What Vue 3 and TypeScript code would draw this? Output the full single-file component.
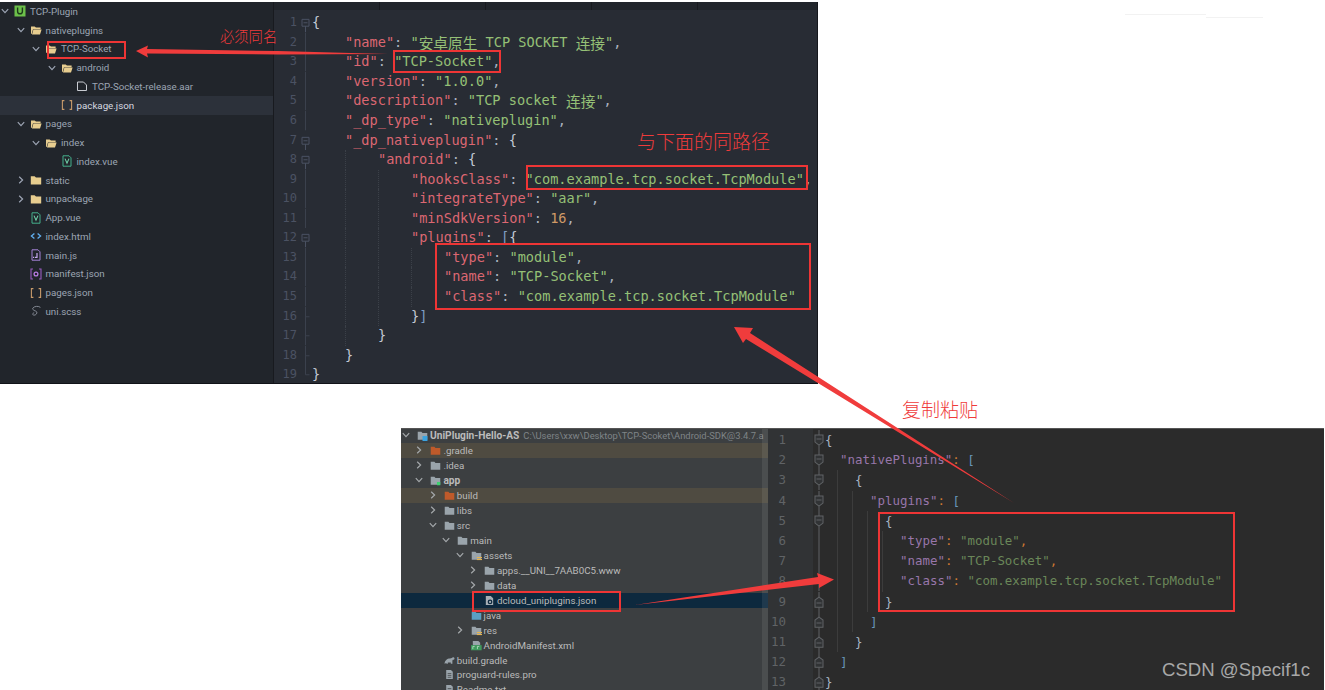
<script setup lang="ts">
interface Token { cls: string; text: string }
interface TreeRow { d: number; label: string; icon: string; chev?: 'd' | 'r'; cls?: string }
interface CodeLine { n: number; indent: number; fold: string; tokens: Token[] }

function tokenize(src: string): Token[] {
  const out: Token[] = []
  const re = /"[^"]*"|\d+|[\[\]{}:,]|\s+/g
  let m: RegExpExecArray | null
  while ((m = re.exec(src))) {
    const t = m[0]
    if (t[0] === '"') {
      const isKey = src.slice(re.lastIndex).startsWith(':')
      const base = isKey ? 'k' : 's'
      t.split(/([\u4e00-\u9fff]+)/).forEach((p, i) => {
        if (p) out.push({ cls: i % 2 ? base + ' cjk' : base, text: p })
      })
    } else if (/^\d/.test(t)) out.push({ cls: 'val', text: t })
    else if (t === ':' || t === ',') out.push({ cls: 'c', text: t })
    else if (t === '[' || t === ']') out.push({ cls: 'b', text: t })
    else out.push({ cls: 'p', text: t })
  }
  return out
}

function build(src: [number, string, string][]): CodeLine[] {
  return src.map(([indent, fold, text], i) => ({ n: i + 1, indent, fold, tokens: tokenize(text) }))
}

const topLines = build([
  [0, 'f-box', '{'],
  [1, 'f-line', '"name": "安卓原生 TCP SOCKET 连接",'],
  [1, 'f-line', '"id": "TCP-Socket",'],
  [1, 'f-line', '"version": "1.0.0",'],
  [1, 'f-line', '"description": "TCP socket 连接",'],
  [1, 'f-line', '"_dp_type": "nativeplugin",'],
  [1, 'f-box', '"_dp_nativeplugin": {'],
  [2, 'f-box', '"android": {'],
  [3, 'f-line', '"hooksClass": "com.example.tcp.socket.TcpModule",'],
  [3, 'f-line', '"integrateType": "aar",'],
  [3, 'f-line', '"minSdkVersion": 16,'],
  [3, 'f-box', '"plugins": [{'],
  [4, 'f-line', '"type": "module",'],
  [4, 'f-line', '"name": "TCP-Socket",'],
  [4, 'f-line', '"class": "com.example.tcp.socket.TcpModule"'],
  [3, 'f-tick', '}]'],
  [2, 'f-tick', '}'],
  [1, 'f-tick', '}'],
  [0, 'f-end', '}'],
])

const bottomLines = build([
  [0, 'b-down', '{'],
  [1, 'b-down', '"nativePlugins": ['],
  [2, 'b-down', '{'],
  [3, 'b-down', '"plugins": ['],
  [4, 'b-down', '{'],
  [5, 'b-line', '"type": "module",'],
  [5, 'b-line', '"name": "TCP-Socket",'],
  [5, 'b-line', '"class": "com.example.tcp.socket.TcpModule"'],
  [4, 'b-up', '}'],
  [3, 'b-up', ']'],
  [2, 'b-up', '}'],
  [1, 'b-up', ']'],
  [0, 'b-up', '}'],
])

const topTree: TreeRow[] = [
  { d: 0, label: 'TCP-Plugin', icon: 'i-uni', chev: 'd' },
  { d: 1, label: 'nativeplugins', icon: 'i-open', chev: 'd' },
  { d: 2, label: 'TCP-Socket', icon: 'i-open', chev: 'd' },
  { d: 3, label: 'android', icon: 'i-open', chev: 'd' },
  { d: 4, label: 'TCP-Socket-release.aar', icon: 'i-file' },
  { d: 3, label: 'package.json', icon: 'i-json', cls: 'sel' },
  { d: 1, label: 'pages', icon: 'i-open', chev: 'd' },
  { d: 2, label: 'index', icon: 'i-open', chev: 'd' },
  { d: 3, label: 'index.vue', icon: 'i-vue' },
  { d: 1, label: 'static', icon: 'i-folder', chev: 'r' },
  { d: 1, label: 'unpackage', icon: 'i-folder', chev: 'r' },
  { d: 1, label: 'App.vue', icon: 'i-vue' },
  { d: 1, label: 'index.html', icon: 'i-html' },
  { d: 1, label: 'main.js', icon: 'i-js' },
  { d: 1, label: 'manifest.json', icon: 'i-manifest' },
  { d: 1, label: 'pages.json', icon: 'i-json' },
  { d: 1, label: 'uni.scss', icon: 'i-sass' },
]

const bottomTree: TreeRow[] = [
  { d: 0, label: 'UniPlugin-Hello-AS', icon: 'a-module', chev: 'd', cls: 'bold' },
  { d: 1, label: '.gradle', icon: 'a-orange', chev: 'r', cls: 'excl' },
  { d: 1, label: '.idea', icon: 'a-folder', chev: 'r' },
  { d: 1, label: 'app', icon: 'a-app', chev: 'd', cls: 'bold' },
  { d: 2, label: 'build', icon: 'a-orange', chev: 'r', cls: 'excl' },
  { d: 2, label: 'libs', icon: 'a-folder', chev: 'r' },
  { d: 2, label: 'src', icon: 'a-folder', chev: 'd' },
  { d: 3, label: 'main', icon: 'a-folder', chev: 'd' },
  { d: 4, label: 'assets', icon: 'a-res', chev: 'd' },
  { d: 5, label: 'apps.__UNI__7AAB0C5.www', icon: 'a-folder', chev: 'r' },
  { d: 5, label: 'data', icon: 'a-folder', chev: 'r' },
  { d: 5, label: 'dcloud_uniplugins.json', icon: 'a-json', cls: 'focus' },
  { d: 4, label: 'java', icon: 'a-java' },
  { d: 4, label: 'res', icon: 'a-res', chev: 'r' },
  { d: 4, label: 'AndroidManifest.xml', icon: 'a-xml' },
  { d: 2, label: 'build.gradle', icon: 'a-gradle' },
  { d: 2, label: 'proguard-rules.pro', icon: 'a-file' },
  { d: 2, label: 'Readme.txt', icon: 'a-file' },
]
</script>

<template>
  <div class="canvas">
    <svg class="defs" aria-hidden="true">
      <symbol id="chev-d" viewBox="0 0 8 8"><path d="M.8 2.2 4 5.6l3.2-3.4" fill="none" stroke="currentColor" stroke-width="1.2" /></symbol>
      <symbol id="chev-r" viewBox="0 0 8 8"><path d="M2.2.8 5.6 4 2.2 7.2" fill="none" stroke="currentColor" stroke-width="1.2" /></symbol>

      <symbol id="i-uni" viewBox="0 0 12 12"><rect x=".5" y=".5" width="11" height="11" fill="#6cc04a" /><path d="M3.6 2.6v3.8a2.4 2.4 0 0 0 4.8 0V2.6" fill="none" stroke="#1d3a1a" stroke-width="1.4" /></symbol>
      <symbol id="i-open" viewBox="0 0 12 12"><path d="M1 2.4h3.6L6 3.6h4.6v1.6H3L1.6 10H1z" fill="#e7cd8f" /><path d="M3.4 5.4h8.2L10 10.4H2z" fill="#e7cd8f" /></symbol>
      <symbol id="i-folder" viewBox="0 0 12 12"><path d="M.8 2.2h3.8L6 3.4h5.2v7.2H.8z" fill="#e7cd8f" /></symbol>
      <symbol id="i-file" viewBox="0 0 12 12"><path d="M1.5 2h6l3 3v5.5h-9z" fill="none" stroke="#c9ccd2" stroke-width="1" /></symbol>
      <symbol id="i-json" viewBox="0 0 12 12"><path d="M3.4 1.6H1.4v8.8h2M8.6 1.6h2v8.8h-2" fill="none" stroke="#c79a6a" stroke-width="1.1" /></symbol>
      <symbol id="i-vue" viewBox="0 0 12 12"><path d="M2 .8h6l2 2v8.4H2z" fill="none" stroke="#45b08c" stroke-width="1" /><path d="M4 3.6l2 4.6 2-4.6" fill="none" stroke="#6fd0a8" stroke-width="1.1" /></symbol>
      <symbol id="i-html" viewBox="0 0 12 12"><path d="M4.4 3.4 1.4 6l3 2.6M7.6 3.4l3 2.6-3 2.6" fill="none" stroke="#61afef" stroke-width="1.3" /></symbol>
      <symbol id="i-js" viewBox="0 0 12 12"><path d="M2 .8h6l2 2v8.4H2z" fill="none" stroke="#a583d8" stroke-width="1" /><path d="M7 4v4.4H4.8M3 8.4h1" fill="none" stroke="#c6aaf0" stroke-width="1.2" /></symbol>
      <symbol id="i-manifest" viewBox="0 0 12 12"><path d="M3 1H1v10h2M9 1h2v10H9" fill="none" stroke="#9a5cc0" stroke-width="1.1" /><circle cx="6" cy="6" r="1.9" fill="none" stroke="#b77be0" stroke-width="1.3" /></symbol>
      <symbol id="i-sass" viewBox="0 0 12 12"><path d="M10.4 2.4C8.6 .8 4.2 1 2.8 3.2 1.6 5 6 5.6 6.8 7c.6 1.2-1 3.4-3 3.2-1.6-.2-1-2 .4-3" fill="none" stroke="#8d939e" stroke-width=".9" /></symbol>

      <symbol id="a-folder" viewBox="0 0 12 12"><path d="M.8 2h4L6 3.2h5.2v7.4H.8z" fill="#9aa4ab" /></symbol>
      <symbol id="a-orange" viewBox="0 0 12 12"><path d="M.8 2h4L6 3.2h5.2v7.4H.8z" fill="#bf5a2a" /></symbol>
      <symbol id="a-java" viewBox="0 0 12 12"><path d="M.8 2h4L6 3.2h5.2v7.4H.8z" fill="#5a9fc2" /></symbol>
      <symbol id="a-module" viewBox="0 0 12 12"><path d="M.8 2h4L6 3.2h5.2v7.4H.8z" fill="#9aa4ab" /><rect x="6" y="6.6" width="5.4" height="5.4" fill="#3aa3e0" /></symbol>
      <symbol id="a-app" viewBox="0 0 12 12"><path d="M.8 2h4L6 3.2h5.2v7.4H.8z" fill="#9aa4ab" /><rect x="7.6" y="7.6" width="3.6" height="3.6" fill="#3fcf70" /></symbol>
      <symbol id="a-res" viewBox="0 0 12 12"><path d="M.8 2h4L6 3.2h5.2v7.4H.8z" fill="#9aa4ab" /><rect x="6.4" y="7.6" width="5.6" height="1.2" fill="#e6b450" /><rect x="6.4" y="9.8" width="5.6" height="1.2" fill="#e6b450" /></symbol>
      <symbol id="a-json" viewBox="0 0 12 12"><path d="M2 1h5.4L10 3.6V11H2z" fill="#a6afb6" /><circle cx="6.6" cy="7.6" r="2.6" fill="#0d293e" /><circle cx="6.6" cy="7.6" r="1.2" fill="#a6afb6" /></symbol>
      <symbol id="a-xml" viewBox="0 0 12 12"><path d="M2 1h6l2 2v3H2z" fill="#9aa4ab" /><rect y="5.6" width="11.6" height="5.6" fill="#3f9a5d" /><path d="M2 7v3M2 7h2M7 7v3M7 7h2" stroke="#c9e9d4" stroke-width=".8" fill="none" /></symbol>
      <symbol id="a-gradle" viewBox="0 0 12 12"><path d="M.6 9.6C.8 6 3.4 3.8 6.6 3.8c1.6 0 2.4-1.6 3.6-1.4 1.4.2 1.6 2 .8 2.6-.6.4-1.2 0-1.6.4-.4.8-.2 2.6-.2 4.2H7.4V8.2H4.2v1.4H2.6V8.6z" fill="#9aa4ab" /></symbol>
      <symbol id="a-file" viewBox="0 0 12 12"><path d="M2.4 1h5.2l2 2v8H2.4z" fill="#9aa4ab" /><path d="M4 5h4M4 7h4M4 9h4" stroke="#3c3f41" stroke-width=".8" /></symbol>

      <symbol id="f-box" viewBox="0 0 12 20" preserveAspectRatio="none"><path d="M2 6.5h7v7H2zM3.5 10h4" fill="none" stroke="#4b5263" /><path d="M5.5 13.5V20" stroke="#4b5263" /></symbol>
      <symbol id="f-line" viewBox="0 0 12 20" preserveAspectRatio="none"><path d="M5.5 0v20" stroke="#3c424e" /></symbol>
      <symbol id="f-tick" viewBox="0 0 12 20" preserveAspectRatio="none"><path d="M5.5 0v20M5.5 10h4" fill="none" stroke="#3c424e" /></symbol>
      <symbol id="f-end" viewBox="0 0 12 20" preserveAspectRatio="none"><path d="M5.5 0v10h4" fill="none" stroke="#3c424e" /></symbol>
      <symbol id="b-down" viewBox="0 0 12 20" preserveAspectRatio="none"><path d="M6 0v5M6 15v5" stroke="#606366" /><path d="M2 5h8v7l-4 3-4-3zM3.5 9h5" fill="#313335" stroke="#606366" /></symbol>
      <symbol id="b-line" viewBox="0 0 12 20" preserveAspectRatio="none"><path d="M6 0v20" stroke="#606366" /></symbol>
      <symbol id="b-up" viewBox="0 0 12 20" preserveAspectRatio="none"><path d="M6 0v5M6 15v5" stroke="#606366" /><path d="M2 15h8V8L6 5 2 8zM3.5 11h5" fill="#313335" stroke="#606366" /></symbol>
    </svg>

    <div class="faint faint-a"></div>
    <div class="faint faint-b"></div>

    <section class="win top">
      <aside class="side">
        <div v-for="r in topTree" :key="r.label + r.d" class="row" :class="r.cls" :style="{ paddingLeft: 15.5 * r.d + 1 + 'px' }">
          <svg class="chev"><use v-if="r.chev" :href="'#chev-' + r.chev" /></svg>
          <svg class="ic"><use :href="'#' + r.icon" /></svg>
          <span class="label">{{ r.label }}</span>
        </div>
      </aside>
      <main class="editor">
        <div class="tabs"><i></i><i></i><i></i><i></i></div>
        <div v-for="l in topLines" :key="l.n" class="line">
          <span class="num">{{ l.n }}</span>
          <svg class="fold"><use :href="'#' + l.fold" /></svg>
          <span v-for="g in l.indent" :key="g" class="guide" :class="{ on: g > 1 }"></span>
          <span v-for="(t, i) in l.tokens" :key="i" :class="t.cls">{{ t.text }}</span>
        </div>
      </main>
    </section>

    <section class="win bottom">
      <aside class="side">
        <div v-for="r in bottomTree" :key="r.label + r.d" class="row" :class="r.cls" :style="{ paddingLeft: 13.4 * r.d + 1 + 'px' }">
          <svg class="chev"><use v-if="r.chev" :href="'#chev-' + r.chev" /></svg>
          <svg class="ic"><use :href="'#' + r.icon" /></svg>
          <span class="label">{{ r.label }}</span>
          <span v-if="r.d === 0" class="path">C:\Users\xxw\Desktop\TCP-Scoket\Android-SDK@3.4.7.a</span>
        </div>
        <div class="scroll"></div>
      </aside>
      <main class="editor">
        <div v-for="l in bottomLines" :key="l.n" class="line">
          <span class="num">{{ l.n }}</span>
          <svg class="fold"><use :href="'#' + l.fold" /></svg>
          <span v-for="g in l.indent" :key="g" class="guide" :class="{ on: g < l.indent }"></span>
          <span v-for="(t, i) in l.tokens" :key="i" :class="t.cls">{{ t.text }}</span>
        </div>
        <span class="mark">CSDN @Specif1c</span>
      </main>
    </section>

    <svg class="overlay" viewBox="0 0 1325 690">
      <g fill="none" stroke="#ee3535" stroke-width="2">
        <rect x="48" y="42" width="77" height="16" />
        <rect x="394" y="51" width="106" height="21" />
        <rect x="527" y="166" width="280" height="23" />
        <rect x="436" y="244" width="374" height="65" />
        <rect x="473" y="592" width="147" height="19" />
        <rect x="879" y="513" width="355" height="98" />
      </g>
      <g fill="#f03c3c">
        <polygon points="136,51 148,45.5 147,49 278,51 388,54 278,54.5 147,53.5 148,57.5" />
        <polygon points="734,327 753,328 750,333 1014,503 746,339 743,343" />
        <polygon points="635,605 818,577 817,573 834,579.5 819,588 819,584" />
      </g>
    </svg>

    <span class="note note-a">必须同名</span>
    <span class="note note-b">与下面的同路径</span>
    <span class="note note-c">复制粘贴</span>
  </div>
</template>

<style scoped>
.canvas {
  position: relative;
  width: 1325px;
  height: 690px;
  overflow: hidden;
  background: #fff;
  font-family: Roboto, "Liberation Sans", sans-serif;
}
.defs { position: absolute; width: 0; height: 0; }
.faint { position: absolute; height: 1px; background: #f2f2f2; }
.faint-a { left: 1125px; top: 14px; width: 81px; }
.faint-b { left: 1206px; top: 17px; width: 57px; }

.win { position: absolute; display: flex; overflow: hidden; }
.side { flex: none; position: relative; }
.editor { flex: 1; position: relative; min-width: 0; }
.row { display: flex; align-items: center; white-space: nowrap; }
.chev { flex: none; width: 8px; height: 8px; }
.ic { flex: none; }
.line { display: flex; align-items: stretch; white-space: pre; }
.fold { flex: none; width: 12px; height: 100%; }
.guide { flex: none; }

/* Upper window: dark editor */
.top { left: 0; top: 2px; width: 818px; height: 382px; background: #282c34; border-bottom: 1px solid #111318; box-sizing: border-box; border-right: 1px solid #15171c; }
.top .side { width: 273px; background: #21252b; border-right: 1px solid #181a1f; }
.top .row { height: 18.75px; font-size: 9.75px; color: #9da5b4; }
.top .chev { margin-right: 5px; color: #9da5b4; }
.top .ic { width: 12px; height: 12px; margin-right: 4px; }
.top .row.sel { background: #2c313a; color: #d7dae0; }
.top .tabs { display: flex; height: 8px; background: #21252b; margin-bottom: 3.3px; }
.top .tabs i { width: 105px; border-right: 1px solid #181a1f; }
.top .line { height: 19.55px; line-height: 19.55px; font-family: "DejaVu Sans Mono", "Noto Sans CJK SC", monospace; font-size: 13.6px; color: #abb2bf; }
.top .num { flex: none; width: 23px; margin-right: 3px; text-align: right; color: #4b5263; font-size: 12px; }
.top .guide { width: 33px; }
.top .guide.on { border-left: 1px dotted #3b4048; box-sizing: border-box; }
.top .k { color: #dc6772; }
.top .s { color: #95c076; }
.top .val { color: #d19a66; }
.top .c { color: #abb2bf; }
.top .b { color: #7f9fc4; }
.top .p { color: #c3cad6; }
.top .cjk, .bottom .cjk { font-family: "Noto Sans CJK SC", sans-serif; font-size: 14.7px; }

/* Lower window: IDE project tree */
.bottom { left: 401px; top: 428px; width: 923px; height: 262px; background: #2b2b2b; border-top: 1px solid #555; box-sizing: border-box; }
.bottom .side { width: 367px; height: 262px; margin-top: -1px; background: #3c3f41; overflow: hidden; }
.bottom .row { height: 14.98px; font-size: 9.75px; color: #bbbbbb; }
.bottom .chev { margin-right: 7px; color: #a4a8ab; }
.bottom .ic { width: 11px; height: 11px; margin-right: 2px; }
.bottom .row.bold .label { font-weight: 700; font-size: 10.2px; }
.bottom .row.excl { background: #4f4b41; }
.bottom .row.focus { background: #0d293e; }
.bottom .path { margin-left: 4px; color: #7f8487; font-size: 9.4px; }
.bottom .scroll { position: absolute; right: 0; top: 0; bottom: 0; width: 6px; background: rgba(255, 255, 255, 0.08); }
.bottom .editor { padding-top: 1px; background: linear-gradient(90deg, #313335 45px, #2b2b2b 45px); }
.bottom .line { height: 20.2px; line-height: 20.2px; font-family: "DejaVu Sans Mono", "Noto Sans CJK SC", monospace; font-size: 12.45px; color: #a9b7c6; }
.bottom .num { flex: none; width: 18px; margin-right: 27px; text-align: right; color: #606366; }
.bottom .guide { width: 15px; }
.bottom .guide.on { background: linear-gradient(#3c3c3c, #3c3c3c) no-repeat 12px 0 / 1px 100%; }
.bottom .k { color: #9876aa; }
.bottom .s { color: #6a8759; }
.bottom .c { color: #cc7832; }
.bottom .b { color: #6897bb; }
.bottom .p { color: #a9b7c6; }
.mark { position: absolute; right: 14px; bottom: 8px; font-family: "Liberation Sans", sans-serif; font-size: 18.6px; line-height: 24px; color: #a8a8a8; }

/* Annotations drawn over the screenshots */
.overlay { position: absolute; left: 0; top: 0; width: 1325px; height: 690px; pointer-events: none; }
.note { position: absolute; font-family: "Noto Sans CJK SC", sans-serif; color: #ef3b3b; white-space: nowrap; font-weight: 300; }
.note-a { left: 220px; top: 25px; font-size: 14.3px; line-height: 22px; }
.note-b { left: 637px; top: 127px; font-size: 19px; line-height: 28px; }
.note-c { left: 902px; top: 395px; font-size: 19px; line-height: 28px; }
</style>
